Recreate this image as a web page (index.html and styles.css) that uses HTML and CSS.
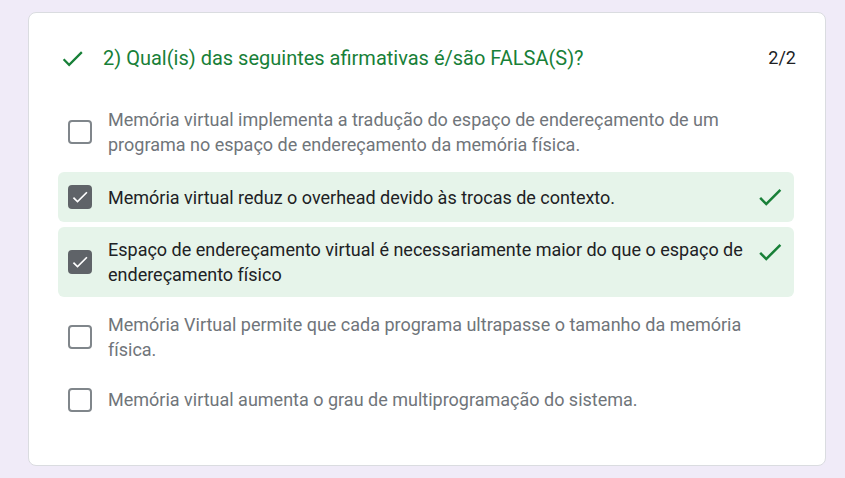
FILE: index.html
```html
<!DOCTYPE html>
<html lang="pt">
<head>
<meta charset="utf-8">
<link rel="stylesheet" href="styles.css">
</head>
<body>
<div class="card">
  <div class="header">
    <svg class="head-check" viewBox="0 0 24 24" width="27" height="27"><path d="M9 16.17L4.83 12l-1.42 1.41L9 19 21 7l-1.41-1.41z" fill="#188038"/></svg>
    <div class="title">2) Qual(is) das seguintes afirmativas é/são FALSA(S)?</div>
    <div class="score">2/2</div>
  </div>
  <div class="options">
    <div class="opt">
      <span class="box"></span>
      <span class="text">Memória virtual implementa a tradução do espaço de endereçamento de um programa no espaço de endereçamento da memória física.</span>
      <span class="mark"></span>
    </div>
    <div class="opt correct">
      <span class="box checked"><svg viewBox="0 0 24 24" width="20" height="20"><path d="M9 16.17L4.83 12l-1.42 1.41L9 19 21 7l-1.41-1.41z" fill="#fff"/></svg></span>
      <span class="text">Memória virtual reduz o overhead devido às trocas de contexto.</span>
      <span class="mark"><svg viewBox="0 0 24 24" width="30" height="30"><path d="M9 16.17L4.83 12l-1.42 1.41L9 19 21 7l-1.41-1.41z" fill="#188038"/></svg></span>
    </div>
    <div class="opt correct">
      <span class="box checked"><svg viewBox="0 0 24 24" width="20" height="20"><path d="M9 16.17L4.83 12l-1.42 1.41L9 19 21 7l-1.41-1.41z" fill="#fff"/></svg></span>
      <span class="text">Espaço de endereçamento virtual é necessariamente maior do que o espaço de endereçamento físico</span>
      <span class="mark"><svg viewBox="0 0 24 24" width="30" height="30"><path d="M9 16.17L4.83 12l-1.42 1.41L9 19 21 7l-1.41-1.41z" fill="#188038"/></svg></span>
    </div>
    <div class="opt">
      <span class="box"></span>
      <span class="text">Memória Virtual permite que cada programa ultrapasse o tamanho da memória física.</span>
      <span class="mark"></span>
    </div>
    <div class="opt">
      <span class="box"></span>
      <span class="text">Memória virtual aumenta o grau de multiprogramação do sistema.</span>
      <span class="mark"></span>
    </div>
  </div>
</div>
</body>
</html>
```

FILE: styles.css
```css
html, body {
  margin: 0;
  padding: 0;
}
body {
  background: #f0ebf8;
  font-family: Roboto, "Liberation Sans", sans-serif;
  padding: 12px 19px 11px 28px;
  height: 478px;
  box-sizing: border-box;
}
.card {
  background: #fff;
  border: 1px solid #dadce0;
  border-radius: 8px;
  height: 454px;
  box-sizing: border-box;
  padding: 31px 29px 0 29px;
}
.header {
  display: flex;
  align-items: center;
  height: 28px;
  padding-left: 1px;
}
.head-check {
  flex: none;
  margin-right: 17px;
}
.title {
  flex: 1;
  color: #188038;
  font-size: 20px;
  line-height: 26px;
}
.score {
  color: #202124;
  font-size: 18px;
  line-height: 24px;
}
.options {
  margin-top: 25px;
  margin-right: 2px;
  display: flex;
  flex-direction: column;
  gap: 5px;
}
.opt {
  display: flex;
  align-items: center;
  padding: 10px 9px 10px 10px;
  border-radius: 6px;
}
.opt.correct {
  background: #e6f4ea;
  min-height: 30px;
}
.box {
  flex: none;
  width: 24px;
  height: 24px;
  box-sizing: border-box;
  border: 2px solid #80868b;
  border-radius: 4px;
  margin-right: 16px;
  display: flex;
  align-items: center;
  justify-content: center;
}
.box.checked {
  background: #5f6368;
  border-color: #5f6368;
}
.text {
  flex: 1;
  font-size: 18px;
  line-height: 25px;
  color: #70757a;
}
.correct .text {
  color: #202124;
}
.mark {
  flex: none;
  align-self: flex-start;
  width: 30px;
  height: 25px;
  margin-left: 8px;
}
.correct .mark {
  height: 30px;
}
.mark svg {
  display: block;
}
```
